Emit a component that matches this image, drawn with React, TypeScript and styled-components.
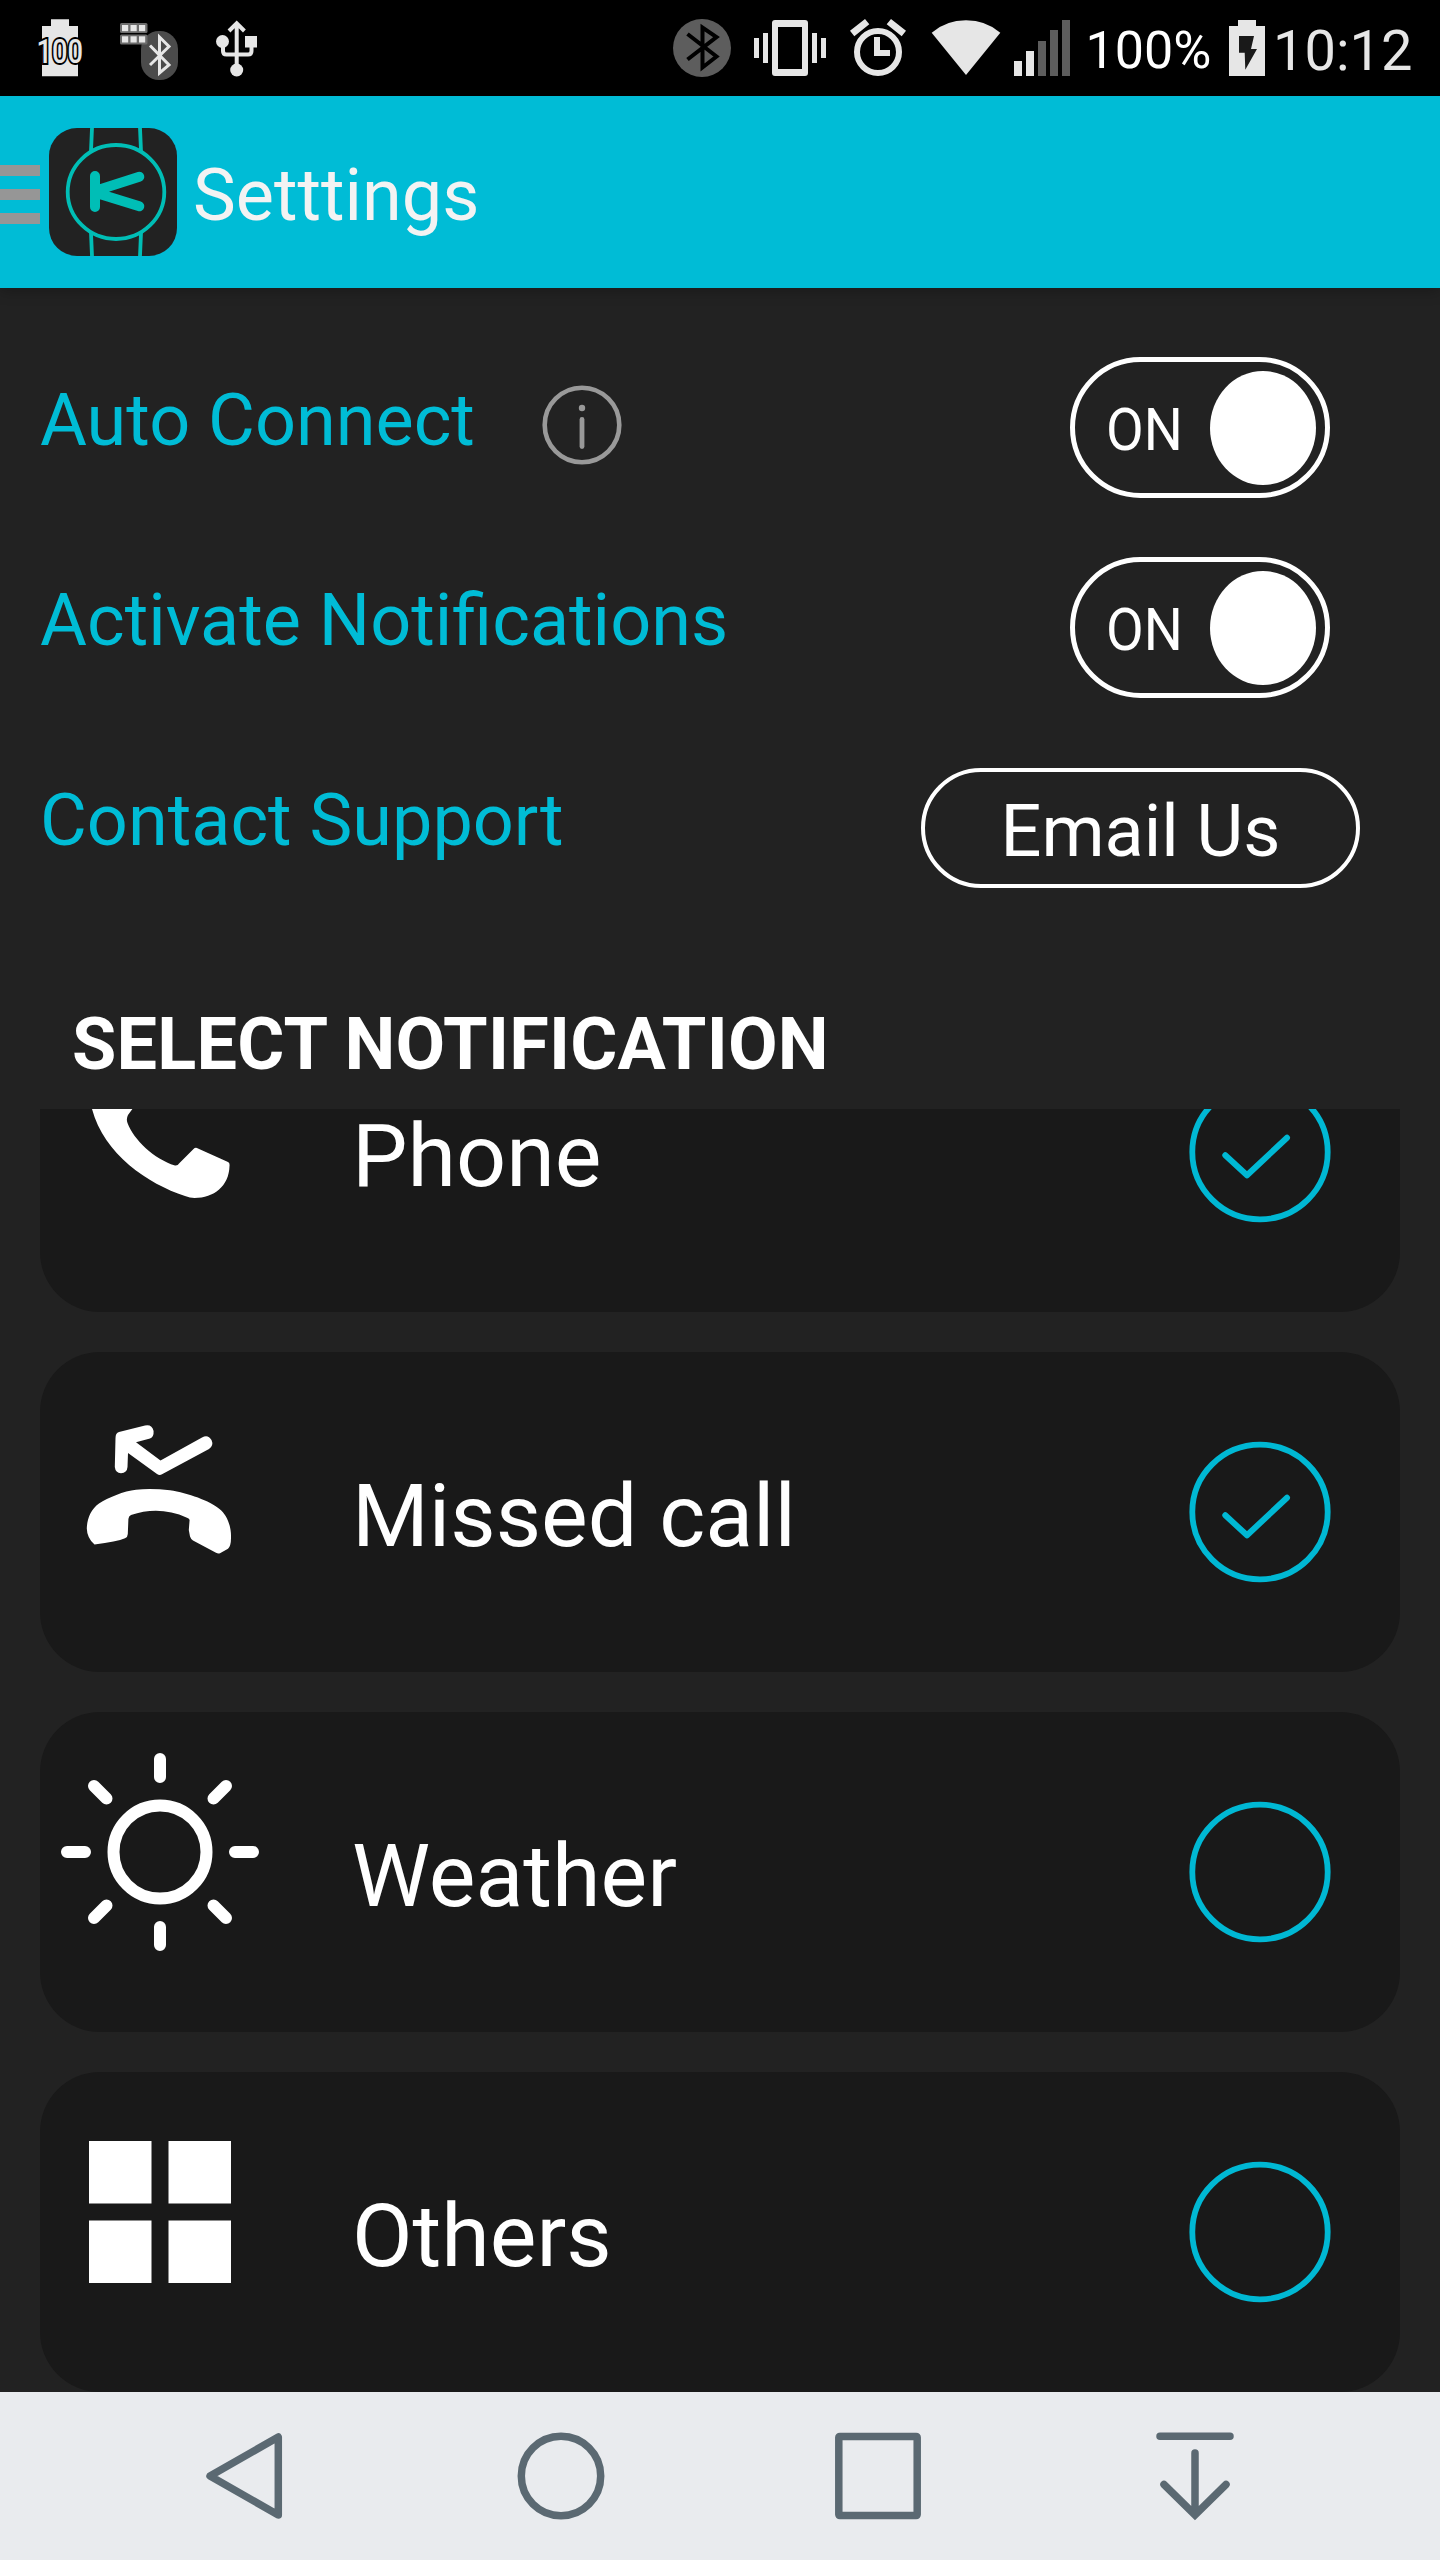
import React from "react";
import styled, { createGlobalStyle } from "styled-components";

const cyan = "#00bcd6";
const light = "#e6e6e6";
const dim = "#5d5d5d";
const slate = "#5b6972";

const GlobalStyle = createGlobalStyle`
  * { box-sizing: border-box; }
  body { margin: 0; background: #222222; font-family: Roboto, "Liberation Sans", sans-serif; }
  svg { display: block; flex: none; }
`;

const Screen = styled.div`
  display: flex;
  flex-direction: column;
  width: 1440px;
  height: 2560px;
  overflow: hidden;
  background: #222222;
`;

const StatusBar = styled.header`
  display: flex;
  flex: none;
  height: 96px;
  background: #000;
  padding: 0 24px 0 32px;
`;

const StatusGroup = styled.div<{ $end?: boolean }>`
  display: flex;
  ${(p) => (p.$end ? "margin-left: auto; width: 744px;" : "gap: 30px;")}
`;

const Glyph = styled.svg<{ $gap?: number }>`
  height: 96px;
  margin-left: ${(p) => p.$gap ?? 0}px;
  overflow: visible;
`;

const Percent = styled.span`
  width: 144px;
  padding: 5px 0 0 15.5px;
  font-size: 52px;
  line-height: 91px;
  color: #fff;
`;

const Clock = styled.span`
  padding: 6px 0 0 7px;
  font-size: 56px;
  line-height: 90px;
  color: ${light};
`;

const AppBar = styled.div`
  display: flex;
  align-items: center;
  flex: none;
  height: 192px;
  background: ${cyan};
  box-shadow: 0 2px 14px rgba(0, 0, 0, 0.3);
  z-index: 1;
`;

const MenuBars = styled.div`
  display: flex;
  flex-direction: column;
  gap: 13.4px;
  width: 40px;
  margin: 5px 9px 0 0;
`;

const MenuBar = styled.i`
  height: 10.6px;
  background: #969696;
`;

const Title = styled.h1`
  margin: 7px 0 0 16px;
  font-size: 72px;
  line-height: 84px;
  font-weight: 400;
  color: #f3f3f3;
`;

const Settings = styled.section`
  display: flex;
  flex-direction: column;
  flex: none;
  padding-top: 32px;
`;

const SettingRow = styled.div<{ $right: number }>`
  display: flex;
  height: 200px;
  padding: 0 ${(p) => p.$right}px 0 40px;
`;

const SettingLabel = styled.span`
  font-size: 72px;
  line-height: 202px;
  color: ${cyan};
`;

const InfoIcon = styled.svg`
  margin: 65px 0 0 67px;
`;

const Toggle = styled.div`
  display: flex;
  align-items: center;
  width: 260px;
  height: 141px;
  margin: 37px 0 0 auto;
  padding: 0 8px 0 31px;
  border: 5.6px solid #fff;
  border-radius: 71px;
`;

const ToggleText = styled.span`
  width: 104px;
  padding-top: 5px;
  font-size: 59px;
  line-height: 72px;
  color: #fff;
  transform: scaleX(0.93);
  transform-origin: left;
`;

const Knob = styled.i`
  flex: none;
  width: 106px;
  height: 114px;
  border-radius: 50%;
  background: #fff;
`;

const EmailButton = styled.button`
  width: 439px;
  height: 120px;
  margin: 48px 0 0 auto;
  padding: 7px 0 0;
  border: 4px solid #fff;
  border-radius: 60px;
  background: none;
  font: 400 72px/84px Roboto, "Liberation Sans", sans-serif;
  color: #fff;
`;

const SectionTitle = styled.h2`
  flex: none;
  height: 189px;
  margin: 0;
  padding: 60px 0 0 72px;
  font-size: 72px;
  line-height: 129px;
  font-weight: 700;
  letter-spacing: 0.22px;
  color: #fff;
`;

const List = styled.ul`
  display: flex;
  flex-direction: column;
  gap: 40px;
  height: 1283px;
  flex: none;
  margin: 0;
  padding: 0 40px;
  overflow: hidden;
  list-style: none;
`;

const Card = styled.li`
  display: flex;
  align-items: center;
  flex: none;
  height: 320px;
  padding-right: 69px;
  border-radius: 60px;
  background: #191919;

  /* the list is scrolled part of the way through its first card */
  &:first-child { margin-top: -117px; }
`;

const CardIcon = styled.svg`
  align-self: flex-start;
  width: 240px;
  height: 280px;
`;

const CardLabel = styled.span`
  flex: 1;
  margin: 8px 0 0 72px;
  font-size: 88px;
  line-height: 88px;
  color: #fff;
`;

const NavBar = styled.nav`
  display: grid;
  grid-template-columns: repeat(4, 317px);
  flex: none;
  height: 168px;
  padding-left: 85px;
  background: #e9ebee;
`;

const BT = "M-14.5 -13.5 L14.5 9 L0.5 20 V-20 L14.5 -10.5 L-14.5 12";

function Status() {
  return (
    <StatusBar>
      <StatusGroup>
        <Glyph width="56" viewBox="32 0 56 96">
          <path d="M51 19.3h18V26h9v50.3H42V26h9z" fill={light} />
          <text x="36.5" y="63.3" textLength="46.5" lengthAdjust="spacingAndGlyphs" fontSize="34"
            fontWeight="500" fill={light} stroke="#000" strokeWidth="4" paintOrder="stroke">100</text>
        </Glyph>
        <Glyph width="64" viewBox="118 0 64 96">
          <rect x="141" y="31" width="37" height="49" rx="18" fill="#4b4b4b" />
          <rect x="120" y="23" width="27.500" height="10" rx="1.500" fill="#6c6c6c" />
          <rect x="120" y="34.500" width="27.500" height="10" rx="1.500" fill="#6c6c6c" />
          {[122, 130.5, 139].map((x) => (
            <g key={x} fill={light}>
              <rect x={x} y="25" width="6.200" height="6.200" />
              <rect x={x} y="36.300" width="6.200" height="6.200" />
            </g>
          ))}
          <path d="M150 45.500 L169 65 L159.500 73 V37 L169 46.500 L150 65" fill="none" stroke={light} strokeWidth="3" />
        </Glyph>
        <Glyph $gap={2} width="46" viewBox="214 0 46 96">
          <g fill="none" stroke={light} strokeWidth="4">
            <path d="M236.700 70V23M229 31l7.700-7.700 7.700 7.700" />
            <path d="M223 42v9q0 3.500 3.500 3.500H248q3.500 0 3.500-3.500v-9" />
          </g>
          <circle cx="222.500" cy="41.500" r="6.500" fill={light} />
          <rect x="245" y="36" width="12" height="11.500" fill={light} />
          <circle cx="236.700" cy="70" r="6.500" fill={light} />
        </Glyph>
      </StatusGroup>
      <StatusGroup $end>
        <Glyph width="60" viewBox="672 0 60 96">
          <circle cx="702" cy="48" r="29" fill={dim} />
          <path transform="translate(702 47.500)" d={BT} fill="none" stroke="#000" strokeWidth="4" />
        </Glyph>
        <Glyph $gap={20} width="76" viewBox="752 0 76 96" fill={light}>
          <path fillRule="evenodd" d="M775 20h30q3 0 3 3v50q0 3-3 3h-30q-3 0-3-3V23q0-3 3-3zM778 27v42h24V27z" />
          <path d="M754 38h5v20h-5zM763 33h5v30h-5zM812 33h5v30h-5zM821 38h5v20h-5z" />
        </Glyph>
        <Glyph $gap={20} width="60" viewBox="848 0 60 96">
          <circle cx="878" cy="52" r="21" fill="none" stroke={light} strokeWidth="6" />
          <path fill={light} d="M874 37h6v13h10v6h-16zM850 30.700 865 19l4.300 5.300-15 12zM906 30.700 891 19l-4.300 5.300 15 12z" />
        </Glyph>
        <Glyph $gap={22} width="72" viewBox="930 0 72 96">
          <path d="M931.700 32.700Q946 20.300 966 20.300T1000.300 32.700L966 75z" fill={light} />
        </Glyph>
        <Glyph $gap={12} width="56" viewBox="1014 0 56 96">
          <path d="M1014 61h8v15h-8zM1026 51h8v25h-8z" fill={light} />
          <path d="M1038 41h8v35h-8zM1050 30h8v46h-8zM1062 20h8v56h-8z" fill={dim} />
        </Glyph>
        <Percent>100%</Percent>
        <Glyph $gap={14} width="38" viewBox="1228 0 38 96">
          <path d="M1238 20h18v6h9v50h-36V26h9z" fill={light} />
          <path d="M1239 36h15l-3 13h6l-11.700 20.700-.6-17H1239z" fill="#191919" />
        </Glyph>
        <Clock>10:12</Clock>
      </StatusGroup>
    </StatusBar>
  );
}

function Logo() {
  return (
    <svg width="128" height="128" viewBox="49 128 128 128">
      <rect x="49" y="128" width="128" height="128" rx="28" fill="#222" />
      <g fill="none" stroke="#00beb6" strokeWidth="3.800">
        <ellipse cx="116" cy="192" rx="48.300" ry="47" />
        <path d="M92 128 91 151M140 128 141 151M92 256 91 233M140 256 141 233" />
        <g strokeWidth="10" strokeLinecap="round">
          <path d="M95 176v31M98 190l41.300-13.300M98 193.500l41.300 12.800" />
        </g>
      </g>
    </svg>
  );
}

function Check({ checked }: { checked: boolean }) {
  return (
    <svg width="142" height="142" viewBox="-71 -71 142 142" fill="none" stroke="#00b8d4">
      <ellipse rx="67.700" ry="67.300" strokeWidth="5.800" />
      {checked && (
        <path d="M-34.700 3.300-13 23.300 27-14.300" strokeWidth="6" strokeLinecap="round" strokeLinejoin="round" />
      )}
    </svg>
  );
}

const PhoneIcon = () => (
  <CardIcon viewBox="40 992 240 280" fill="#fff">
    <path d="M92 1109C90 1097 92 1084 101 1076Q109 1067 124 1066L141 1092Q142 1096 139 1100L128 1115Q126 1119 127.500 1123C134 1140 154 1159 175 1165.500Q177.500 1166 179.500 1163L193.500 1149Q195.500 1147 198 1148.500L228 1162Q230 1163 229.500 1166C229 1186 214 1198 194.500 1198Q190 1198 185 1196C148 1184 104 1154 92 1109Z" />
  </CardIcon>
);

const MissedIcon = () => (
  <CardIcon viewBox="40 1352 240 280" fill="#fff">
    <path d="M119 1432 145 1425.500Q152 1424 153.600 1431 154 1437 150 1438.500L136 1442.300 160.500 1460.500 202 1437.500Q208 1434 211.500 1440 214 1445.500 209 1449L162 1474.300Q159.500 1475.700 157 1474L128 1453 127.500 1467Q127 1473 121 1473.200 115.500 1473 114.800 1467L115.500 1438Q115.500 1433 119 1432Z" />
    <path d="M94.500 1544.600Q87 1538 86.800 1528.500C87 1519 91 1509 99 1503.500C108 1497.500 124 1491 136 1489.700Q152 1488.300 170 1490.300C188 1493 210 1501 219.500 1509C227 1515 231.500 1526 231 1538Q231 1546 228 1548.800L220 1553.300Q218 1554 216 1552.800L193 1540.500Q190.800 1539 190 1536.500L188.800 1530 189.600 1520Q189.500 1518.500 187 1517.800C168 1509 149 1509 131 1515Q128.700 1516 128.400 1519L127.800 1534Q127.800 1537 125 1538.200 117 1541.500 94.500 1544.600Z" />
  </CardIcon>
);

const WeatherIcon = () => (
  <CardIcon viewBox="-120 -140 240 280" fill="none" stroke="#fff" strokeWidth="12" strokeLinecap="round">
    <circle r="46.500" />
    {[0, 90, 180, 270].map((a) => (
      <path key={a} transform={`rotate(${a})`} d="M0-93V-75M53.500-53.500 66-66" />
    ))}
  </CardIcon>
);

const OthersIcon = () => (
  <CardIcon viewBox="-120 -140 240 280" fill="#fff">
    <path d="M-71-71h62.500v62.500H-71zM8.500-71H71v62.500H8.500zM-71 8.500h62.500V71H-71zM8.500 8.500H71V71H8.500z" />
  </CardIcon>
);

const items = [
  { label: "Phone", Icon: PhoneIcon, checked: true },
  { label: "Missed call", Icon: MissedIcon, checked: true },
  { label: "Weather", Icon: WeatherIcon, checked: false },
  { label: "Others", Icon: OthersIcon, checked: false },
];

const OnToggle = () => (
  <Toggle>
    <ToggleText>ON</ToggleText>
    <Knob />
  </Toggle>
);

const NavIcon = ({ children }: { children: React.ReactNode }) => (
  <svg width="317" height="168" viewBox="-159 -84 317 168" fill="none" stroke={slate}
    strokeWidth="7.500" strokeLinecap="round" strokeLinejoin="round">
    {children}
  </svg>
);

export default function App() {
  return (
    <Screen>
      <GlobalStyle />
      <Status />
      <AppBar>
        <MenuBars>
          <MenuBar />
          <MenuBar />
          <MenuBar />
        </MenuBars>
        <Logo />
        <Title>Setttings</Title>
      </AppBar>
      <Settings>
        <SettingRow $right={110}>
          <SettingLabel>Auto Connect</SettingLabel>
          <InfoIcon width="80" height="80" viewBox="-40 -40 80 80" fill="none" stroke="#999">
            <circle r="37.300" strokeWidth="4.600" />
            <circle cy="-17" r="3.200" fill="#999" stroke="none" />
            <path d="M0-5.500V21.500" strokeWidth="4.800" strokeLinecap="round" />
          </InfoIcon>
          <OnToggle />
        </SettingRow>
        <SettingRow $right={110}>
          <SettingLabel>Activate Notifications</SettingLabel>
          <OnToggle />
        </SettingRow>
        <SettingRow $right={80}>
          <SettingLabel>Contact Support</SettingLabel>
          <EmailButton>Email Us</EmailButton>
        </SettingRow>
      </Settings>
      <SectionTitle>SELECT NOTIFICATION</SectionTitle>
      <List>
        {items.map(({ label, Icon, checked }) => (
          <Card key={label}>
            <Icon />
            <CardLabel>{label}</CardLabel>
            <Check checked={checked} />
          </Card>
        ))}
      </List>
      <NavBar>
        <NavIcon><path d="M34.300-39V39L-34 0z" strokeLinejoin="round" /></NavIcon>
        <NavIcon><circle r="39.700" /></NavIcon>
        <NavIcon><rect x="-39.200" y="-39.600" width="78.400" height="79.200" rx="1" /></NavIcon>
        <NavIcon><path d="M-35-39.700H35M0-23V38M-31 8.500 0 39 31 8.500" strokeLinejoin="miter" /></NavIcon>
      </NavBar>
    </Screen>
  );
}
